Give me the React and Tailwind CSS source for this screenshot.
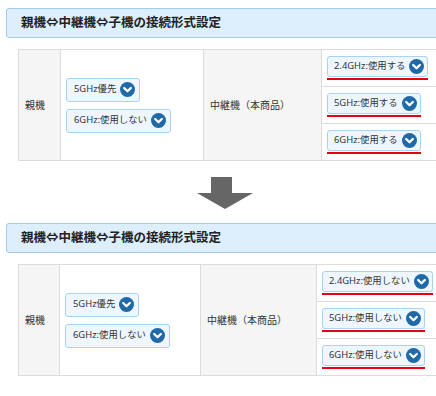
function Chevron() {
  return (
    <svg width="15" height="15" viewBox="0 0 15 15" className="shrink-0">
      <circle cx="7.5" cy="7.5" r="7.5" fill="#1f69a8" />
      <polyline
        points="4.2,6 7.5,9.3 10.8,6"
        fill="none"
        stroke="#fff"
        strokeWidth="2.3"
        strokeLinecap="round"
        strokeLinejoin="round"
      />
    </svg>
  );
}

function Select({ label, tall }) {
  return (
    <div
      className={`inline-flex items-center w-fit border border-[#a9d3f5] bg-[#eef7ff] rounded-[3px] text-[9.4px] text-[#333] whitespace-nowrap ${
        tall ? "h-[24px] pl-[7px] pr-[4px] gap-[4px]" : "h-[21px] pl-[6px] pr-[3px] gap-[4px]"
      }`}
    >
      <span>{label}</span>
      <Chevron />
    </div>
  );
}

function Header() {
  return (
    <div className="ml-[6px] w-[440px] h-[30px] flex items-center pl-[14px] border border-[#a3cdf0] bg-[#ddeefc] rounded-[3px] text-[12.5px] font-bold text-[#222]">
      親機⇔中継機⇔子機の接続形式設定
    </div>
  );
}

function SettingsTable({ widths, parent, repeater }) {
  return (
    <div className="ml-[18px] mt-[11px] flex w-[440px] border border-[#dcdcdc] text-[10px] text-[#333]">
      <div className={`${widths[0]} shrink-0 bg-[#f5f5f5] flex items-center pl-[6px]`}>
        親機
      </div>
      <div className={`${widths[1]} shrink-0 border-l border-[#dcdcdc] flex flex-col justify-center gap-[7px] pl-[5px]`}>
        {parent.map((p) => (
          <Select key={p} label={p} tall />
        ))}
      </div>
      <div className={`${widths[2]} shrink-0 border-l border-[#dcdcdc] bg-[#f5f5f5] flex items-center pl-[6px]`}>
        中継機（本商品）
      </div>
      <div className="flex-1 border-l border-[#dcdcdc] flex flex-col">
        {repeater.map((r, i) => (
          <div
            key={r}
            className={`px-[5px] pt-[6px] pb-[6px] ${i > 0 ? "border-t border-[#dcdcdc]" : ""}`}
          >
            <div className="w-fit border-b-2 border-[#e60012] pb-[1px]">
              <Select label={r} />
            </div>
          </div>
        ))}
      </div>
    </div>
  );
}

export default function App() {
  return (
    <div
      className="w-[436px] h-[396px] overflow-hidden bg-white pt-2"
      style={{ fontFamily: '"Noto Sans", "Noto Sans CJK JP", sans-serif' }}
    >
      <Header />
      <SettingsTable
        widths={["w-[41px]", "w-[143px]", "w-[118px]"]}
        parent={["5GHz優先", "6GHz:使用しない"]}
        repeater={["2.4GHz:使用する", "5GHz:使用する", "6GHz:使用する"]}
      />

      {/* arrow */}
      <div className="pl-[197px] mt-[16px] mb-[14px]">
        <svg width="56" height="32" viewBox="0 0 56 32" className="block">
          <polygon points="14,0 35,0 35,16 56,16 28,32 0,16 14,16" fill="#666" />
        </svg>
      </div>

      <Header />
      <SettingsTable
        widths={["w-[40px]", "w-[141px]", "w-[116px]"]}
        parent={["5GHz優先", "6GHz:使用しない"]}
        repeater={["2.4GHz:使用しない", "5GHz:使用しない", "6GHz:使用しない"]}
      />
    </div>
  );
}
